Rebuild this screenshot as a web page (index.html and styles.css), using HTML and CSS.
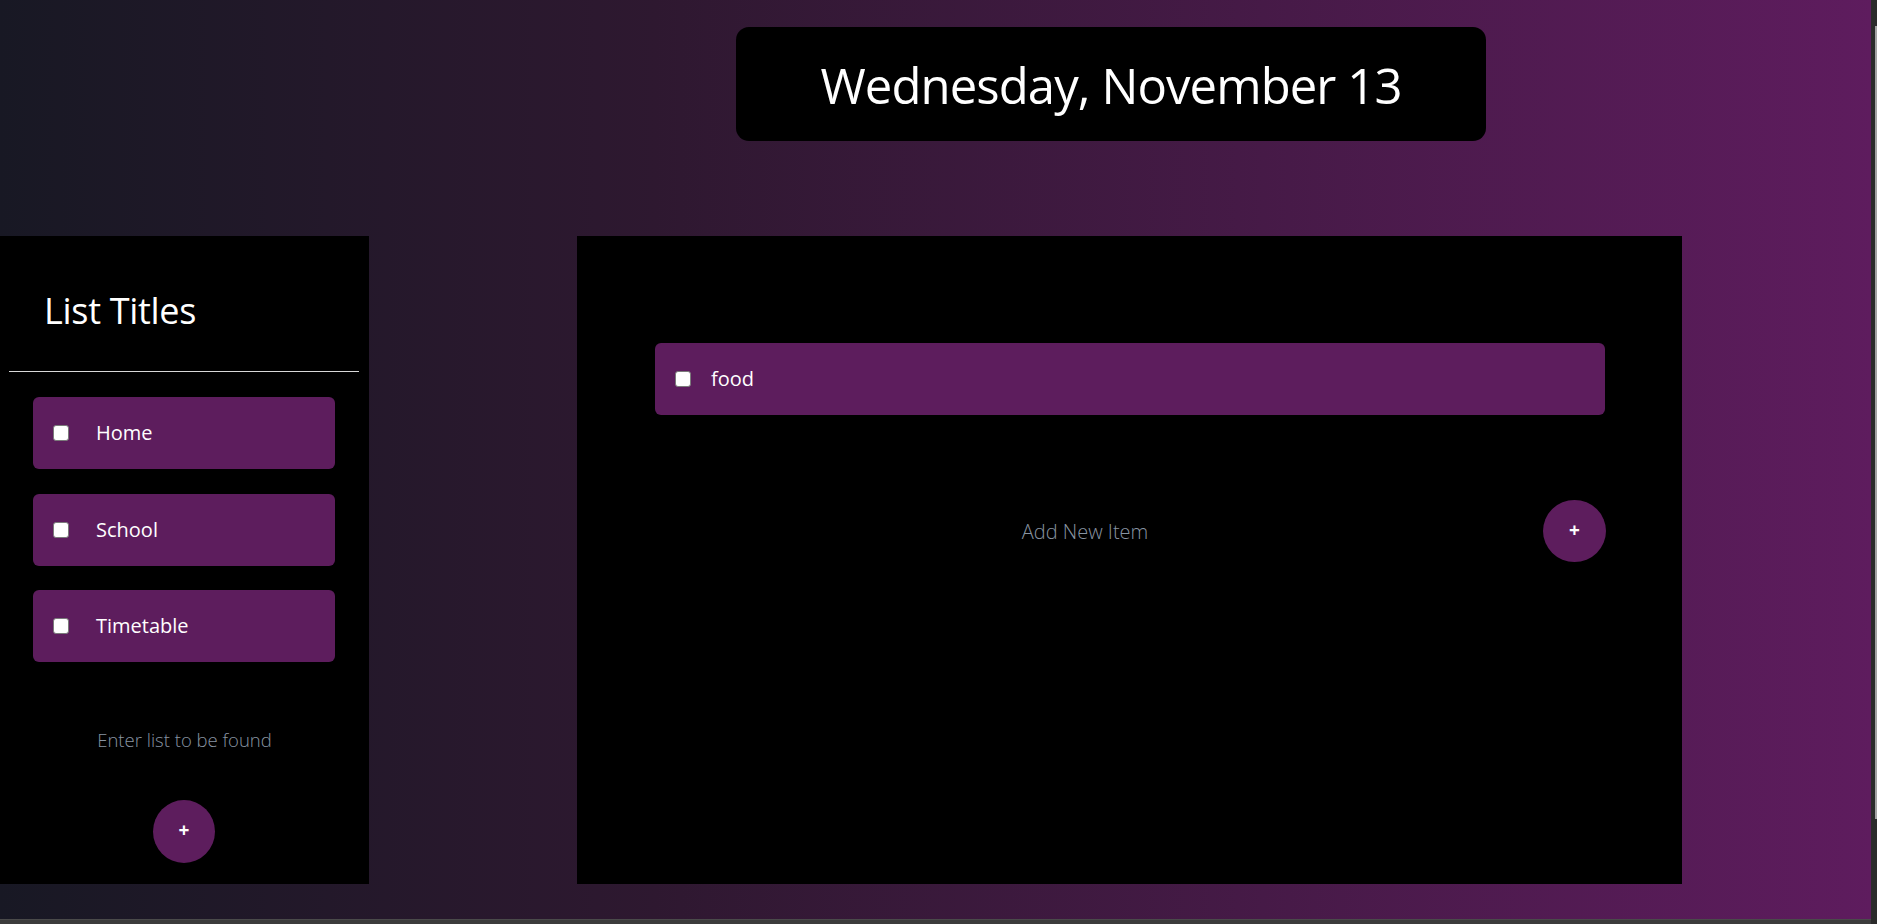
FILE: index.html
```html
<!DOCTYPE html>
<html lang="en">
<head>
<meta charset="utf-8">
<title>Lists</title>
<link rel="stylesheet" href="styles.css">
</head>
<body>
<div class="screen">
  <div class="app">
    <header class="date-box">
      <h1 class="date-text">Wednesday, November 13</h1>
    </header>
    <div class="panels">
      <aside class="side">
        <h2 class="side-title">List Titles</h2>
        <hr class="side-rule">
        <ul class="side-list">
          <li class="item side-item"><input type="checkbox" class="check"><span class="item-label side-label">Home</span></li>
          <li class="item side-item"><input type="checkbox" class="check"><span class="item-label side-label">School</span></li>
          <li class="item side-item"><input type="checkbox" class="check"><span class="item-label side-label">Timetable</span></li>
        </ul>
        <input class="find-input" type="text" placeholder="Enter list to be found">
        <button class="plus side-plus">+</button>
      </aside>
      <main class="main">
        <ul class="main-list">
          <li class="item main-item"><input type="checkbox" class="check"><span class="item-label main-label">food</span></li>
        </ul>
        <div class="add-row">
          <input class="add-input" type="text" placeholder="Add New Item">
          <button class="plus main-plus">+</button>
        </div>
      </main>
    </div>
  </div>
  <div class="vscroll"><div class="vthumb"></div></div>
  <div class="hbar"></div>
  <div class="corner"></div>
</div>
</body>
</html>
```
FILE: styles.css
```css
* { box-sizing: border-box; }
html, body { margin: 0; padding: 0; }
body {
  width: 1877px;
  height: 924px;
  overflow: hidden;
  font-family: "Open Sans", "Noto Sans", sans-serif;
  background: #3a3a3a;
}
.screen {
  display: grid;
  grid-template-columns: 1871px 6px;
  grid-template-rows: 919px 5px;
  width: 1877px;
  height: 924px;
}
.app {
  background: linear-gradient(to right, #181824 0%, #2e1830 35%, #5e1c5e 100%);
  display: flex;
  flex-direction: column;
  overflow: hidden;
}
.date-box {
  margin: 27px 0 0 736px;
  width: 750px;
  height: 114px;
  background: #000;
  border-radius: 13px;
  display: flex;
  align-items: center;
  justify-content: center;
}
.date-text {
  margin: 0;
  color: #fff;
  font-weight: 400;
  font-size: 49px;
  line-height: 1;
  letter-spacing: -0.9px;
  padding-top: 2px;
}
.panels {
  display: flex;
  margin-top: 95px;
  height: 648px;
}
.side {
  width: 369px;
  background: #000;
  display: flex;
  flex-direction: column;
  padding-top: 55px;
}
.side-title {
  margin: 0 0 0 44px;
  color: #fff;
  font-weight: 400;
  font-size: 36px;
  line-height: 40px;
  letter-spacing: -0.3px;
}
.side-rule {
  margin: 40px 0 0 9px;
  width: 350px;
  border: 0;
  height: 1px;
  background: #d8d8d8;
}
.side-list {
  list-style: none;
  margin: 25px 0 0 33px;
  padding: 0;
  width: 302px;
  display: flex;
  flex-direction: column;
  gap: 24.5px;
}
.item {
  display: flex;
  align-items: center;
  height: 72px;
  background: #5d1d5d;
  border-radius: 6px;
  padding-left: 20px;
}
.check {
  appearance: none;
  -webkit-appearance: none;
  margin: 0;
  width: 16px;
  height: 16px;
  background: #fff;
  border: 1px solid #7a7a7a;
  border-radius: 3px;
  flex: none;
}
.item-label {
  color: #fff;
  font-size: 20px;
  line-height: 1;
}
.side-label { margin-left: 27px; }
.find-input {
  margin: 62px 0 0 0;
  width: 369px;
  height: 30px;
  border: 0;
  background: transparent;
  text-align: center;
  font-family: "Open Sans", "Noto Sans", sans-serif;
  font-weight: 300;
  font-size: 18.5px;
  color: #fff;
  outline: none;
  padding: 0;
}
.find-input::placeholder,
.add-input::placeholder {
  color: #8894a2;
  opacity: 1;
}
.plus {
  border: 0;
  border-radius: 50%;
  background: #5d1d5d;
  color: #fff;
  font-family: "Open Sans", "Noto Sans", sans-serif;
  font-weight: 700;
  font-size: 19px;
  line-height: 1;
  padding: 0 0 2px 0;
  display: flex;
  align-items: center;
  justify-content: center;
}
.side-plus {
  width: 62px;
  height: 63px;
  margin: 46px 0 0 153px;
}
.main {
  width: 1105px;
  margin-left: 208px;
  background: #000;
  padding: 107px 77px 0 78px;
  display: flex;
  flex-direction: column;
}
.main-list {
  list-style: none;
  margin: 0;
  padding: 0;
}
.main-item { width: 950px; }
.main-label { margin-left: 20px; }
.add-row {
  display: flex;
  align-items: center;
  margin-top: 85px;
  width: 951px;
}
.add-input {
  width: 860px;
  height: 30px;
  border: 0;
  background: transparent;
  text-align: center;
  font-family: "Open Sans", "Noto Sans", sans-serif;
  font-weight: 300;
  font-size: 20px;
  color: #fff;
  outline: none;
  padding: 0;
}
.main-plus {
  width: 63px;
  height: 62px;
  margin-left: auto;
}
.vscroll {
  background: #2b2b2b;
  padding: 26px 0 0 4px;
}
.vthumb {
  width: 2px;
  height: 793px;
  background: #a3a3a3;
}
.hbar {
  background: #3c3c3c;
  border-top: 1px solid #4a4a4a;
}
.corner { background: #2b2b2b; }
```
